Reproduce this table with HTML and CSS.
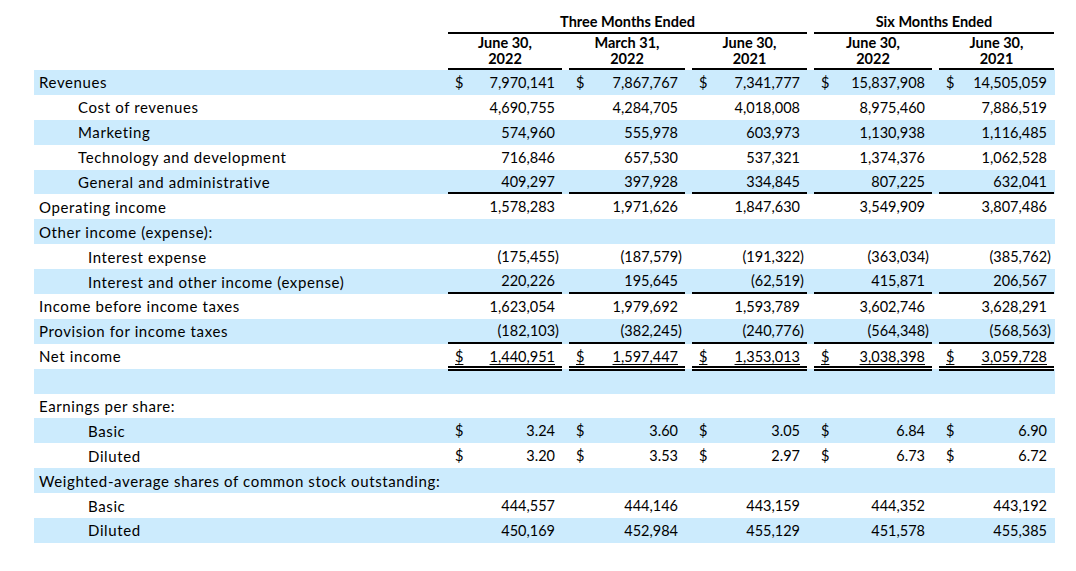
FILE: index.html
```html
<!DOCTYPE html>
<html lang="en">
<head>
<meta charset="utf-8">
<title>Income statement</title>
<link rel="stylesheet" href="styles.css">
</head>
<body>
<div class="stmt">
  <div class="hrow h1">
    <div class="lab"></div>
    <div class="hs span3"><div class="in">Three Months Ended</div></div>
    <div class="hs span2"><div class="in">Six Months Ended</div></div>
  </div>
  <div class="hrow h2">
    <div class="lab"></div>
    <div class="hc"><div class="in">June 30,<br>2022</div></div>
    <div class="hc"><div class="in">March 31,<br>2022</div></div>
    <div class="hc"><div class="in">June 30,<br>2021</div></div>
    <div class="hc"><div class="in">June 30,<br>2022</div></div>
    <div class="hc"><div class="in">June 30,<br>2021</div></div>
  </div>

  <div class="row band">
    <div class="lab l0">Revenues</div>
    <div class="c"><div class="in"><span class="cur">$</span><span class="n">7,970,141</span></div></div>
    <div class="c"><div class="in"><span class="cur">$</span><span class="n">7,867,767</span></div></div>
    <div class="c"><div class="in"><span class="cur">$</span><span class="n">7,341,777</span></div></div>
    <div class="c"><div class="in"><span class="cur">$</span><span class="n">15,837,908</span></div></div>
    <div class="c"><div class="in"><span class="cur">$</span><span class="n">14,505,059</span></div></div>
  </div>
  <div class="row">
    <div class="lab l1">Cost of revenues</div>
    <div class="c"><div class="in"><span class="n">4,690,755</span></div></div>
    <div class="c"><div class="in"><span class="n">4,284,705</span></div></div>
    <div class="c"><div class="in"><span class="n">4,018,008</span></div></div>
    <div class="c"><div class="in"><span class="n">8,975,460</span></div></div>
    <div class="c"><div class="in"><span class="n">7,886,519</span></div></div>
  </div>
  <div class="row band">
    <div class="lab l1">Marketing</div>
    <div class="c"><div class="in"><span class="n">574,960</span></div></div>
    <div class="c"><div class="in"><span class="n">555,978</span></div></div>
    <div class="c"><div class="in"><span class="n">603,973</span></div></div>
    <div class="c"><div class="in"><span class="n">1,130,938</span></div></div>
    <div class="c"><div class="in"><span class="n">1,116,485</span></div></div>
  </div>
  <div class="row">
    <div class="lab l1">Technology and development</div>
    <div class="c"><div class="in"><span class="n">716,846</span></div></div>
    <div class="c"><div class="in"><span class="n">657,530</span></div></div>
    <div class="c"><div class="in"><span class="n">537,321</span></div></div>
    <div class="c"><div class="in"><span class="n">1,374,376</span></div></div>
    <div class="c"><div class="in"><span class="n">1,062,528</span></div></div>
  </div>
  <div class="row band">
    <div class="lab l1">General and administrative</div>
    <div class="c"><div class="in ul"><span class="n">409,297</span></div></div>
    <div class="c"><div class="in ul"><span class="n">397,928</span></div></div>
    <div class="c"><div class="in ul"><span class="n">334,845</span></div></div>
    <div class="c"><div class="in ul"><span class="n">807,225</span></div></div>
    <div class="c"><div class="in ul"><span class="n">632,041</span></div></div>
  </div>
  <div class="row">
    <div class="lab l0">Operating income</div>
    <div class="c"><div class="in"><span class="n">1,578,283</span></div></div>
    <div class="c"><div class="in"><span class="n">1,971,626</span></div></div>
    <div class="c"><div class="in"><span class="n">1,847,630</span></div></div>
    <div class="c"><div class="in"><span class="n">3,549,909</span></div></div>
    <div class="c"><div class="in"><span class="n">3,807,486</span></div></div>
  </div>
  <div class="row band">
    <div class="lab l0">Other income (expense):</div>
    <div class="c"></div><div class="c"></div><div class="c"></div><div class="c"></div><div class="c"></div>
  </div>
  <div class="row">
    <div class="lab l2">Interest expense</div>
    <div class="c"><div class="in neg"><span class="n">(175,455)</span></div></div>
    <div class="c"><div class="in neg"><span class="n">(187,579)</span></div></div>
    <div class="c"><div class="in neg"><span class="n">(191,322)</span></div></div>
    <div class="c"><div class="in neg"><span class="n">(363,034)</span></div></div>
    <div class="c"><div class="in neg"><span class="n">(385,762)</span></div></div>
  </div>
  <div class="row band">
    <div class="lab l2">Interest and other income (expense)</div>
    <div class="c"><div class="in ul"><span class="n">220,226</span></div></div>
    <div class="c"><div class="in ul"><span class="n">195,645</span></div></div>
    <div class="c"><div class="in ul neg"><span class="n">(62,519)</span></div></div>
    <div class="c"><div class="in ul"><span class="n">415,871</span></div></div>
    <div class="c"><div class="in ul"><span class="n">206,567</span></div></div>
  </div>
  <div class="row">
    <div class="lab l0">Income before income taxes</div>
    <div class="c"><div class="in"><span class="n">1,623,054</span></div></div>
    <div class="c"><div class="in"><span class="n">1,979,692</span></div></div>
    <div class="c"><div class="in"><span class="n">1,593,789</span></div></div>
    <div class="c"><div class="in"><span class="n">3,602,746</span></div></div>
    <div class="c"><div class="in"><span class="n">3,628,291</span></div></div>
  </div>
  <div class="row band">
    <div class="lab l0">Provision for income taxes</div>
    <div class="c"><div class="in ul neg"><span class="n">(182,103)</span></div></div>
    <div class="c"><div class="in ul neg"><span class="n">(382,245)</span></div></div>
    <div class="c"><div class="in ul neg"><span class="n">(240,776)</span></div></div>
    <div class="c"><div class="in ul neg"><span class="n">(564,348)</span></div></div>
    <div class="c"><div class="in ul neg"><span class="n">(568,563)</span></div></div>
  </div>
  <div class="row">
    <div class="lab l0">Net income</div>
    <div class="c"><div class="in dbl"><span class="cur u">$</span><span class="n u">1,440,951</span></div></div>
    <div class="c"><div class="in dbl"><span class="cur u">$</span><span class="n u">1,597,447</span></div></div>
    <div class="c"><div class="in dbl"><span class="cur u">$</span><span class="n u">1,353,013</span></div></div>
    <div class="c"><div class="in dbl"><span class="cur u">$</span><span class="n u">3,038,398</span></div></div>
    <div class="c"><div class="in dbl"><span class="cur u">$</span><span class="n u">3,059,728</span></div></div>
  </div>
  <div class="row band">
    <div class="lab"></div>
    <div class="c"></div><div class="c"></div><div class="c"></div><div class="c"></div><div class="c"></div>
  </div>
  <div class="row">
    <div class="lab l0">Earnings per share:</div>
    <div class="c"></div><div class="c"></div><div class="c"></div><div class="c"></div><div class="c"></div>
  </div>
  <div class="row band">
    <div class="lab l2">Basic</div>
    <div class="c"><div class="in"><span class="cur">$</span><span class="n">3.24</span></div></div>
    <div class="c"><div class="in"><span class="cur">$</span><span class="n">3.60</span></div></div>
    <div class="c"><div class="in"><span class="cur">$</span><span class="n">3.05</span></div></div>
    <div class="c"><div class="in"><span class="cur">$</span><span class="n">6.84</span></div></div>
    <div class="c"><div class="in"><span class="cur">$</span><span class="n">6.90</span></div></div>
  </div>
  <div class="row">
    <div class="lab l2">Diluted</div>
    <div class="c"><div class="in"><span class="cur">$</span><span class="n">3.20</span></div></div>
    <div class="c"><div class="in"><span class="cur">$</span><span class="n">3.53</span></div></div>
    <div class="c"><div class="in"><span class="cur">$</span><span class="n">2.97</span></div></div>
    <div class="c"><div class="in"><span class="cur">$</span><span class="n">6.73</span></div></div>
    <div class="c"><div class="in"><span class="cur">$</span><span class="n">6.72</span></div></div>
  </div>
  <div class="row band">
    <div class="lab l0">Weighted-average shares of common stock outstanding:</div>
    <div class="c"></div><div class="c"></div><div class="c"></div><div class="c"></div><div class="c"></div>
  </div>
  <div class="row">
    <div class="lab l2">Basic</div>
    <div class="c"><div class="in"><span class="n">444,557</span></div></div>
    <div class="c"><div class="in"><span class="n">444,146</span></div></div>
    <div class="c"><div class="in"><span class="n">443,159</span></div></div>
    <div class="c"><div class="in"><span class="n">444,352</span></div></div>
    <div class="c"><div class="in"><span class="n">443,192</span></div></div>
  </div>
  <div class="row band">
    <div class="lab l2">Diluted</div>
    <div class="c"><div class="in"><span class="n">450,169</span></div></div>
    <div class="c"><div class="in"><span class="n">452,984</span></div></div>
    <div class="c"><div class="in"><span class="n">455,129</span></div></div>
    <div class="c"><div class="in"><span class="n">451,578</span></div></div>
    <div class="c"><div class="in"><span class="n">455,385</span></div></div>
  </div>
</div>
</body>
</html>
```

FILE: styles.css
```css
* { box-sizing: border-box; }

html, body {
  margin: 0;
  padding: 0;
  background: #ffffff;
}

body {
  font-family: Lato, "Liberation Sans", sans-serif;
  font-size: 14.5px;
  color: #000000;
}

.stmt {
  width: 1021px;
  margin-left: 34px;
  padding-top: 12px;
}

.hrow,
.row {
  display: grid;
  grid-template-columns: 407px 121px 123px 122px 125px 122px;
  padding-right: 1px;
}

.hs .in,
.hc .in,
.c .in {
  margin-left: 7px;
  height: 100%;
}

.h1 {
  height: 22px;
}

.span3 { grid-column: 2 / span 3; }
.span2 { grid-column: 5 / span 2; }

.hs .in {
  border-bottom: 2px solid #000;
  font-weight: 700;
  text-align: center;
  line-height: 20px;
}

.h2 {
  height: 36px;
}

.hc .in {
  border-bottom: 2px solid #000;
  font-weight: 700;
  text-align: center;
  line-height: 16px;
  padding-top: 1px;
}

.row {
  height: 24.9px;
}

.band {
  background: #ccebfd;
}

.lab {
  display: flex;
  align-items: center;
  white-space: nowrap;
  padding-left: 5px;
  font-size: 15px;
  letter-spacing: 0.62px;
}

.lab.l1 { padding-left: 44px; }
.lab.l2 { padding-left: 54px; }

.c .in {
  display: flex;
  align-items: center;
  justify-content: space-between;
  padding: 0 7px 0 7px;
}

.c .in .n {
  margin-left: auto;
}

.c .in.neg {
  padding-right: 3px;
}

.c .in.ul {
  border-bottom: 2px solid #000;
}

.c .in.dbl {
  position: relative;
  height: calc(100% + 2px);
  border-bottom: 5px double #000;
  padding-top: 3px;
}

.u {
  text-decoration: underline;
  text-underline-offset: 2px;
}
```
